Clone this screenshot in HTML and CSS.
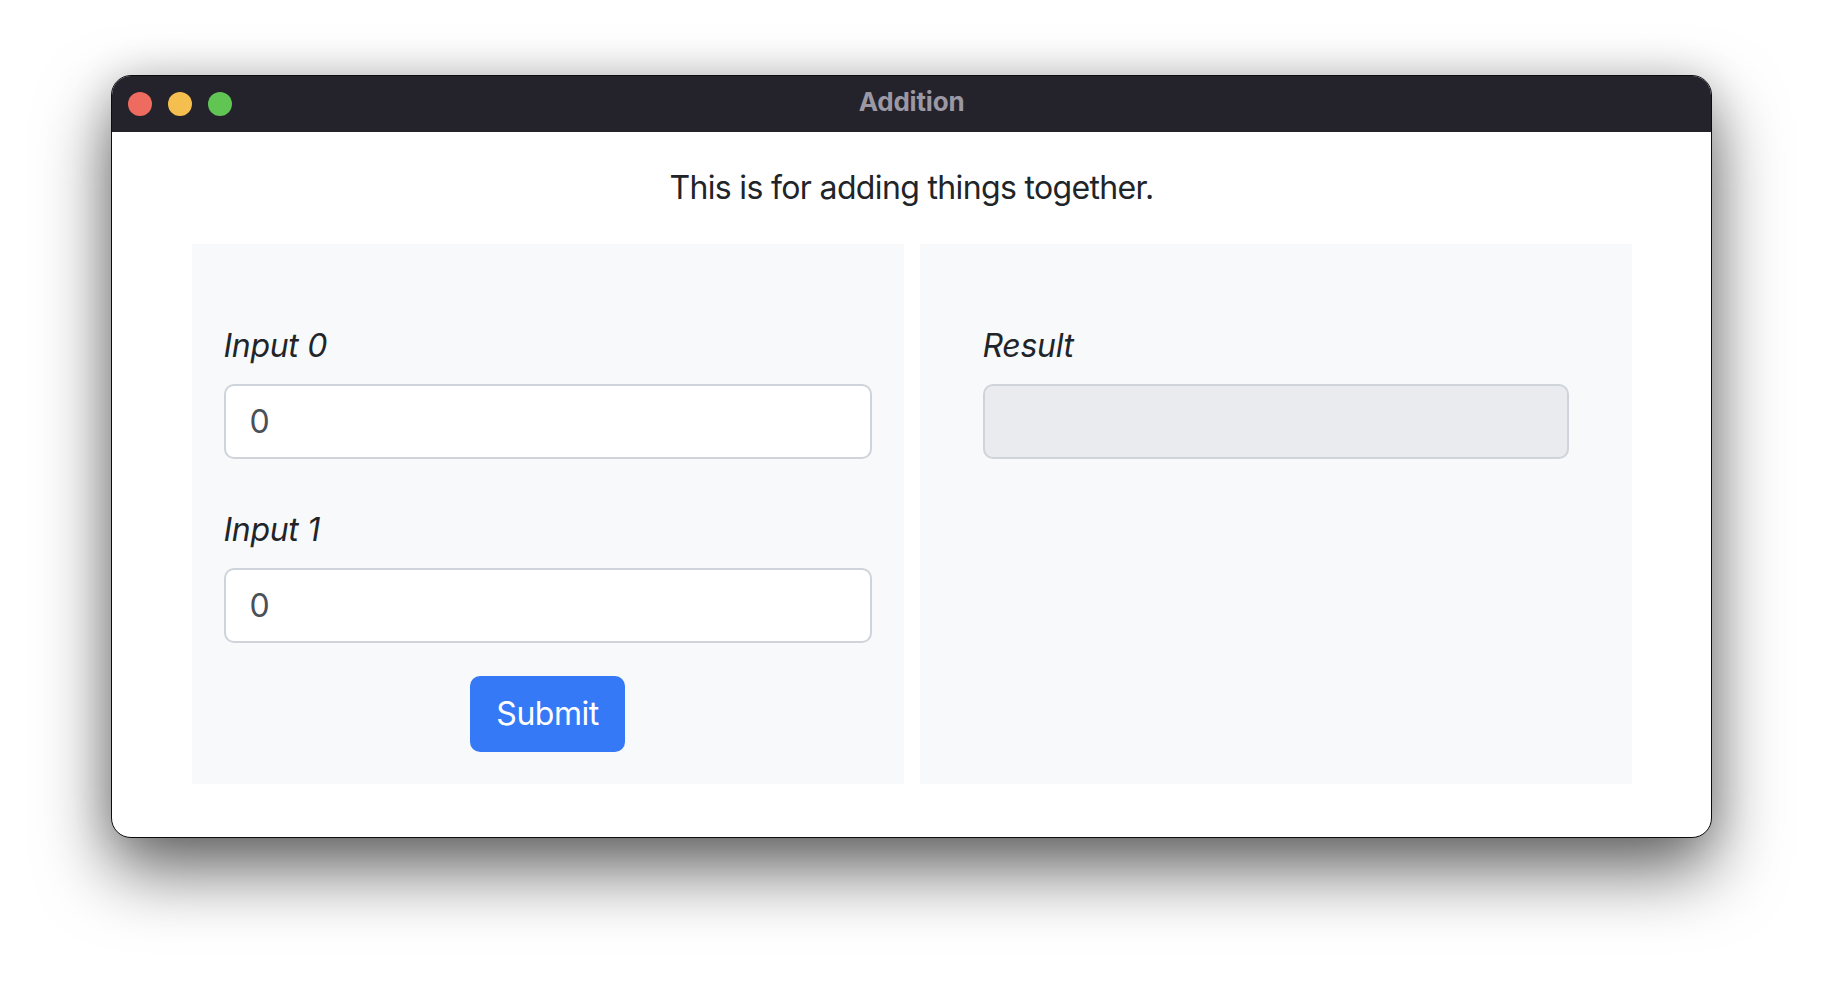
FILE: index.html
```html
<!DOCTYPE html>
<html lang="en">
<head>
<meta charset="utf-8">
<title>Addition</title>
<link rel="stylesheet" href="styles.css">
</head>
<body>
  <div class="window">
    <div class="titlebar">
      <div class="lights">
        <span class="light red"></span>
        <span class="light yellow"></span>
        <span class="light green"></span>
      </div>
      <div class="title">Addition</div>
    </div>
    <div class="content">
      <p class="lead">This is for adding things together.</p>
      <div class="row">
        <div class="panel">
          <div class="group">
            <label class="label">Input 0</label>
            <input class="field" type="text" value="0">
          </div>
          <div class="group">
            <label class="label">Input 1</label>
            <input class="field" type="text" value="0">
          </div>
          <div class="actions">
            <button class="btn">Submit</button>
          </div>
        </div>
        <div class="panel">
          <div class="result-wrap">
            <div class="group">
              <label class="label">Result</label>
              <input class="field disabled" type="text" value="" disabled>
            </div>
          </div>
        </div>
      </div>
    </div>
  </div>
</body>
</html>
```

FILE: styles.css
```css
* { box-sizing: border-box; }

html, body {
  margin: 0;
  padding: 0;
  background: #ffffff;
}

body {
  font-family: Inter, "Liberation Sans", sans-serif;
  color: #212529;
  padding: 75px 0 0 111px;
  height: 986px;
  overflow: hidden;
}

.window {
  width: 1601px;
  border: 1px solid #0c0c0e;
  border-radius: 20px;
  overflow: hidden;
  background: #ffffff;
  box-shadow: 0 32px 70px rgba(0, 0, 0, 0.6), 0 0 40px rgba(0, 0, 0, 0.14);
}

.titlebar {
  height: 56px;
  background: #24222b;
  display: flex;
  align-items: center;
  position: relative;
  padding-left: 16px;
}

.lights {
  display: flex;
  gap: 16px;
}

.light {
  width: 24px;
  height: 24px;
  border-radius: 50%;
  display: block;
}
.red { background: #ee6b60; }
.yellow { background: #f5bf4f; }
.green { background: #61c554; }

.title {
  position: absolute;
  left: 0;
  right: 0;
  top: 10px;
  line-height: 32px;
  text-align: center;
  font-weight: 700;
  font-size: 26px;
  letter-spacing: -0.2px;
  color: #9b98a3;
  pointer-events: none;
}

.content {
  padding: 0 0 53px;
}

.lead {
  margin: 32px 0;
  text-align: center;
  font-size: 32px;
  line-height: 48px;
  letter-spacing: -0.65px;
  color: #212529;
}

.row {
  width: 1440px;
  margin: 0 auto;
  display: grid;
  grid-template-columns: 1fr 1fr;
  gap: 16px;
}

.panel {
  background: #f8f9fa;
  padding: 32px;
  height: 540px;
}

.result-wrap {
  padding: 0 31px;
}

.group {
  padding-top: 46px;
}
.group + .group {
  padding-top: 47px;
}

.label {
  display: block;
  font-size: 32px;
  line-height: 48px;
  font-style: italic;
  letter-spacing: -0.3px;
  color: #212529;
  margin-bottom: 14px;
}

.field {
  display: block;
  width: 100%;
  height: 75px;
  padding: 12px 24px;
  font-family: Inter, "Liberation Sans", sans-serif;
  font-size: 32px;
  line-height: 48px;
  color: #495057;
  background: #ffffff;
  border: 2px solid #ced4da;
  border-radius: 10px;
  outline: none;
}

.field.disabled {
  background: #e9ebee;
}

.actions {
  display: flex;
  justify-content: center;
  padding-top: 33px;
}

.btn {
  height: 76px;
  padding: 12px 24px;
  font-family: Inter, "Liberation Sans", sans-serif;
  font-size: 32px;
  line-height: 48px;
  letter-spacing: -0.5px;
  color: #ffffff;
  background: #3679f6;
  border: 2px solid #3679f6;
  border-radius: 10px;
  cursor: pointer;
}
```
